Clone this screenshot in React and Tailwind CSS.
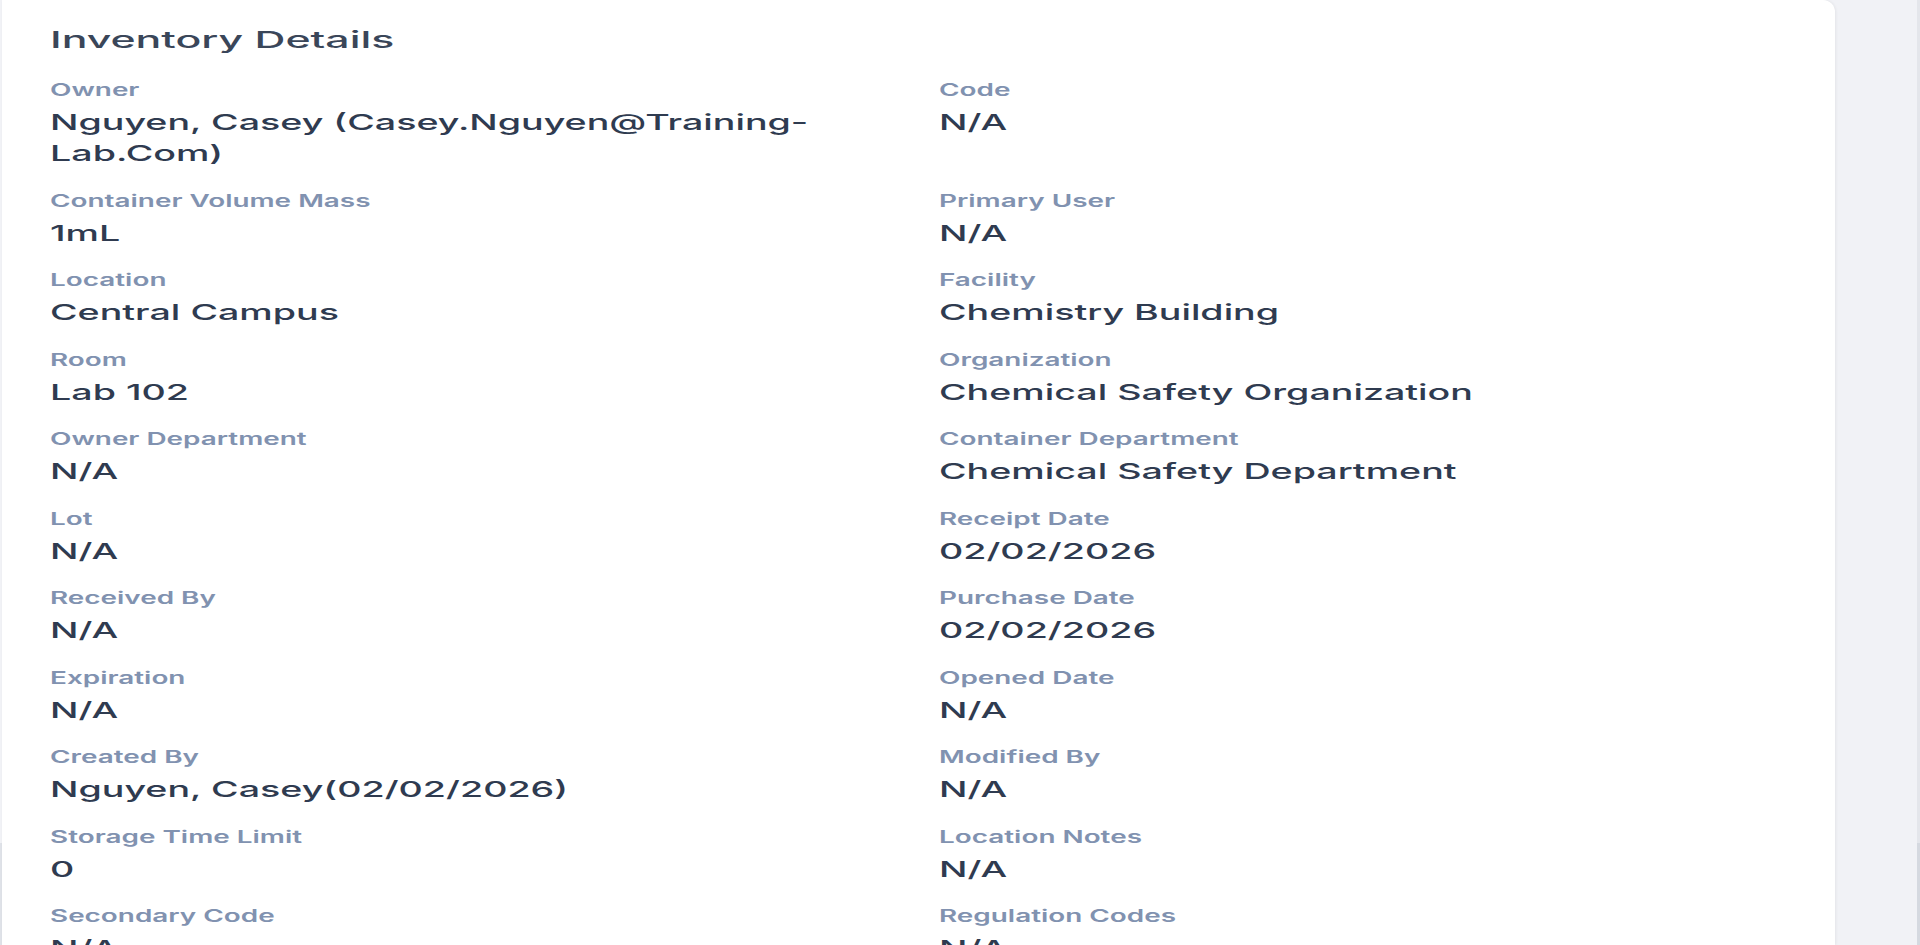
import React from "react";

const fields = [
  ["Owner", "Nguyen, Casey (Casey.Nguyen@Training-Lab.Com)", "Code", "N/A"],
  ["Container Volume Mass", "1mL", "Primary User", "N/A"],
  ["Location", "Central Campus", "Facility", "Chemistry Building"],
  ["Room", "Lab 102", "Organization", "Chemical Safety Organization"],
  ["Owner Department", "N/A", "Container Department", "Chemical Safety Department"],
  ["Lot", "N/A", "Receipt Date", "02/02/2026"],
  ["Received By", "N/A", "Purchase Date", "02/02/2026"],
  ["Expiration", "N/A", "Opened Date", "N/A"],
  ["Created By", "Nguyen, Casey(02/02/2026)", "Modified By", "N/A"],
  ["Storage Time Limit", "0", "Location Notes", "N/A"],
  ["Secondary Code", "N/A", "Regulation Codes", "N/A"],
];

function Field({ label, value }) {
  return (
    <div className="flex flex-col gap-[6px] min-w-0">
      <div className="h-[22px] leading-[22px] text-[17px] font-semibold text-[#8192b0] whitespace-nowrap">
        <span className="inline-block origin-left scale-x-[1.64]">{label}</span>
      </div>
      <div className="text-[22px] leading-[31px] font-medium text-[#2f3b50]">
        <span className="inline-block max-w-[calc(100%/1.71)] origin-left scale-x-[1.71] break-words">
          {value}
        </span>
      </div>
    </div>
  );
}

export default function App() {
  const items = [];
  fields.forEach(([l1, v1, l2, v2]) => {
    items.push(<Field key={l1} label={l1} value={v1} />);
    items.push(<Field key={l2} label={l2} value={v2} />);
  });
  return (
    <div className="w-full h-[945px] overflow-hidden bg-[#f1f2f6] flex font-['Inter','Liberation_Sans',sans-serif]">
      <div className="w-[2px] shrink-0 flex flex-col">
        <div className="h-[843px] bg-[#f1f2f6]" />
        <div className="flex-1 bg-[#dfe2e8]" />
      </div>
      <div className="w-[1833px] shrink-0 bg-white rounded-tr-[12px] shadow-[1px_0_3px_rgba(0,0,0,0.06)] px-[48px] pt-[26px]">
        <h2 className="h-[28px] leading-[28px] text-[23px] font-medium text-[#3a4659]">
          <span className="inline-block origin-left scale-x-[1.86]">Inventory Details</span>
        </h2>
        <div className="mt-[25px] grid grid-cols-2 gap-x-[41px] gap-y-[20.5px]">{items}</div>
      </div>
      <div className="flex-1" />
      <div className="w-[3px] shrink-0 flex flex-col">
        <div className="h-[843px] bg-[#e4e6eb]" />
        <div className="flex-1 bg-[#d5d9e0]" />
      </div>
    </div>
  );
}
